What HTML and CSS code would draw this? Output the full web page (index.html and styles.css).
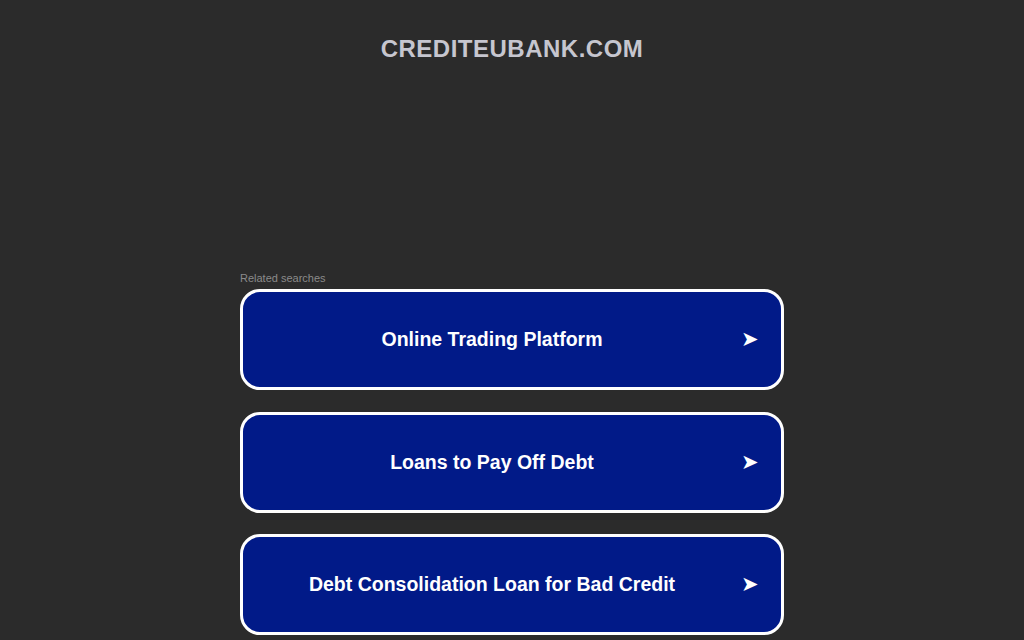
FILE: index.html
```html
<!DOCTYPE html>
<html>
<head>
<meta charset="utf-8">
<link rel="stylesheet" href="styles.css">
</head>
<body>
<div class="page">
  <h1 class="domain">CREDITEUBANK.COM</h1>
  <div class="ads"></div>
  <div class="related">
    <div class="label">Related searches</div>
    <a class="link" href="#"><span class="text">Online Trading Platform</span><span class="arrow">➤</span></a>
    <a class="link" href="#"><span class="text">Loans to Pay Off Debt</span><span class="arrow">➤</span></a>
    <a class="link" href="#"><span class="text">Debt Consolidation Loan for Bad Credit</span><span class="arrow">➤</span></a>
  </div>
</div>
</body>
</html>
```

FILE: styles.css
```css
html, body {
  margin: 0;
  padding: 0;
  background: #2b2b2b;
  font-family: "Liberation Sans", Arial, sans-serif;
  overflow: hidden;
}
.page {
  display: flex;
  flex-direction: column;
  align-items: center;
}
.domain {
  margin: 36px 0 0 0;
  font-size: 24px;
  line-height: 26px;
  font-weight: bold;
  color: #c6c6cf;
  letter-spacing: 0.5px;
}
.ads {
  height: 210px;
}
.related {
  width: 544px;
  display: flex;
  flex-direction: column;
}
.label {
  font-size: 11px;
  line-height: 13px;
  color: #8a8a8a;
  margin-bottom: 4px;
}
.link {
  box-sizing: border-box;
  height: 101px;
  margin-bottom: 21.5px;
  padding: 0 22px 0 0;
  border: 3px solid #ffffff;
  border-radius: 20px;
  background: #011a88;
  color: #ffffff;
  text-decoration: none;
  display: flex;
  align-items: center;
}
.text {
  flex: 1;
  text-align: center;
  font-size: 19.5px;
  font-weight: bold;
}
.arrow {
  width: 18px;
  font-family: "DejaVu Sans", sans-serif;
  font-size: 21px;
  line-height: 1;
}
```
